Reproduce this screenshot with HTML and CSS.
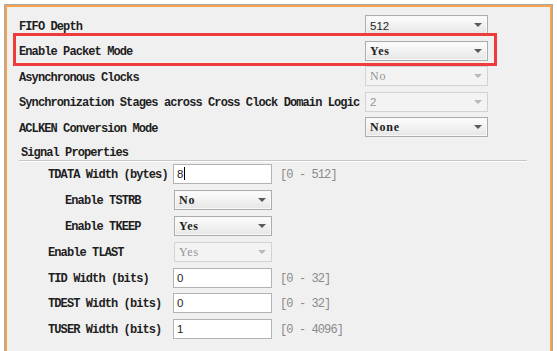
FILE: index.html
```html
<!DOCTYPE html>
<html lang="en">
<head>
    <meta charset="UTF-8">
    <title>AXI4-Stream Data FIFO - Settings</title>
    <link rel="stylesheet" href="styles.css">
</head>
<body>
    <div class="frame">
        <div class="panel">
            <!-- Top level parameters -->
            <div class="params">
                <div class="row">
                    <span class="label">FIFO Depth</span>
                    <div class="select"><span class="num">512</span><svg class="arrow" width="8" height="4"><path d="M0 0h8L4 4z"/></svg></div>
                </div>
                <div class="row marked">
                    <span class="label">Enable Packet Mode</span>
                    <div class="select"><span>Yes</span><svg class="arrow" width="8" height="4"><path d="M0 0h8L4 4z"/></svg></div>
                </div>
                <div class="row">
                    <span class="label">Asynchronous Clocks</span>
                    <div class="select disabled"><span>No</span><svg class="arrow" width="8" height="4"><path d="M0 0h8L4 4z"/></svg></div>
                </div>
                <div class="row">
                    <span class="label">Synchronization Stages across Cross Clock Domain Logic</span>
                    <div class="select disabled"><span class="num">2</span><svg class="arrow" width="8" height="4"><path d="M0 0h8L4 4z"/></svg></div>
                </div>
                <div class="row">
                    <span class="label">ACLKEN Conversion Mode</span>
                    <div class="select"><span>None</span><svg class="arrow" width="8" height="4"><path d="M0 0h8L4 4z"/></svg></div>
                </div>
            </div>

            <!-- Signal properties group -->
            <div class="group">
                <div class="group-title">Signal Properties</div>
                <div class="grow">
                    <span class="glabel">TDATA Width (bytes)</span>
                    <div class="field"><span class="num">8</span><span class="caret"></span></div>
                    <span class="range">[0 - 512]</span>
                </div>
                <div class="grow">
                    <span class="glabel indent">Enable TSTRB</span>
                    <div class="select small"><span>No</span><svg class="arrow" width="8" height="4"><path d="M0 0h8L4 4z"/></svg></div>
                </div>
                <div class="grow">
                    <span class="glabel indent">Enable TKEEP</span>
                    <div class="select small"><span>Yes</span><svg class="arrow" width="8" height="4"><path d="M0 0h8L4 4z"/></svg></div>
                </div>
                <div class="grow">
                    <span class="glabel">Enable TLAST</span>
                    <div class="select small disabled"><span>Yes</span><svg class="arrow" width="8" height="4"><path d="M0 0h8L4 4z"/></svg></div>
                </div>
                <div class="grow">
                    <span class="glabel">TID Width (bits)</span>
                    <div class="field"><span class="num">0</span></div>
                    <span class="range">[0 - 32]</span>
                </div>
                <div class="grow">
                    <span class="glabel">TDEST Width (bits)</span>
                    <div class="field"><span class="num">0</span></div>
                    <span class="range">[0 - 32]</span>
                </div>
                <div class="grow">
                    <span class="glabel">TUSER Width (bits)</span>
                    <div class="field"><span class="num">1</span></div>
                    <span class="range">[0 - 4096]</span>
                </div>
            </div>
        </div>
    </div>
</body>
</html>
```

FILE: styles.css
```css
/* Page and outer frame */
body {
    margin: 0;
    background: #ffffff;
    font-family: "Liberation Mono", monospace;
    font-size: 12px;
    letter-spacing: -0.9px;
    color: #1e1e1e;
    overflow: hidden;
}

.frame {
    padding: 5px 5px 0 5px;
}

.panel {
    height: 344px;
    background: #f0f0f0;
    border: 2px solid #f5a44b;
    border-bottom: none;
    box-shadow: 0 0 0 1px #a9a9a9;
    overflow: hidden;
}

/* Top level parameter rows */
.params {
    width: 469px;
    padding: 5.5px 0 0 12px;
}

.row {
    display: grid;
    grid-template-columns: 346px 123px;
    align-items: center;
    height: 25.5px;
}

.label {
    padding-top: 3px;
    font-weight: bold;
    white-space: nowrap;
}

/* Red annotation around the packet mode row */
.marked {
    position: relative;
}

.marked::after {
    content: "";
    position: absolute;
    left: -6px;
    top: -5px;
    right: -9px;
    bottom: -2px;
    border: 3px solid #ee3b3b;
}

/* Combo boxes */
.select {
    display: flex;
    align-items: center;
    box-sizing: border-box;
    height: 20px;
    padding: 0 4px;
    background: linear-gradient(#fdfdfd, #e6e6e6);
    border: 1px solid #acacac;
    box-shadow: inset 0 0 0 1px #f8f8f8;
    font-family: "Liberation Serif", serif;
    font-weight: bold;
    letter-spacing: 0.8px;
}

.select span {
    padding-top: 1px;
}

.select .arrow {
    margin-left: auto;
    margin-right: 1px;
    fill: #5a5a5a;
}

.select.small {
    margin-left: 1px;
    width: 98px;
}

.select.disabled {
    background: #f3f3f3;
    border-color: #d3d3d3;
    box-shadow: none;
    color: #939393;
    font-weight: normal;
}

.select.disabled .arrow {
    fill: #b8b8b8;
}

.select .num,
.num {
    font-family: "Liberation Sans", Arial, sans-serif;
    font-size: 11.5px;
    letter-spacing: 0;
    font-weight: normal;
}

/* Signal properties group */
.group-title {
    margin: 2px 23px 0 12px;
    padding: 4px 0 0 2px;
    line-height: 14px;
    font-weight: bold;
    border-bottom: 1px solid #c6c6c6;
    box-shadow: 0 1px 0 #ffffff;
}

.grow {
    display: flex;
    align-items: center;
    height: 25.9px;
    padding-left: 41px;
}

.grow:first-of-type {
    margin-top: 3px;
}

.glabel {
    box-sizing: border-box;
    width: 125px;
    padding-top: 2px;
    font-weight: bold;
    white-space: nowrap;
}

.glabel.indent {
    padding-left: 17px;
}

.field {
    display: flex;
    align-items: center;
    box-sizing: border-box;
    width: 99px;
    height: 20px;
    padding: 0 3px;
    background: #ffffff;
    border: 1px solid #b3b3b3;
}

.caret {
    width: 1px;
    height: 13px;
    margin-left: 1px;
    background: #000000;
}

.range {
    margin-left: 8px;
    padding-top: 2px;
    color: #8a8a8a;
}
```
